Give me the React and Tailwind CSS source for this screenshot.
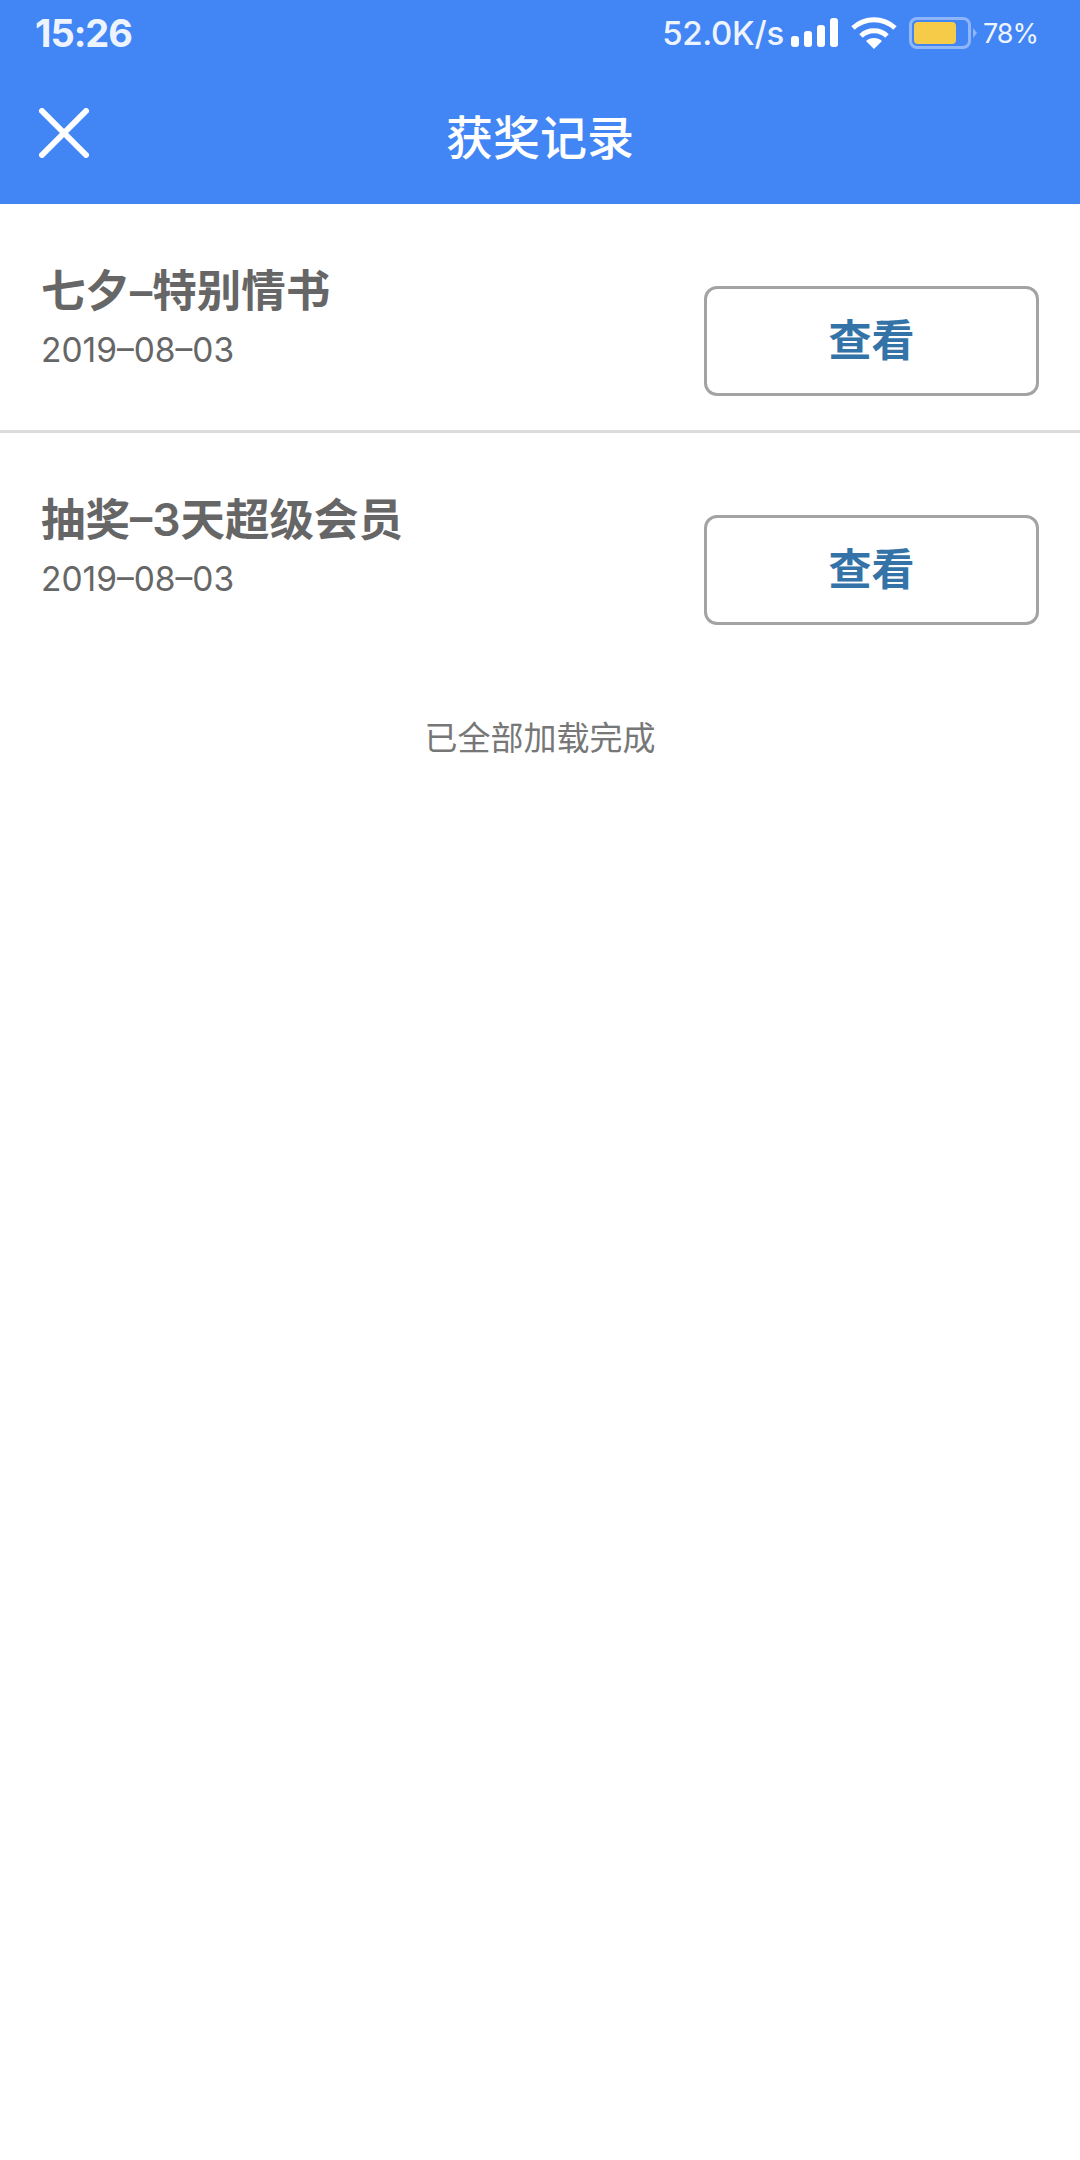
const CJK = "font-['Inter','Noto_Sans_CJK_SC',sans-serif]";

const records = [
  { title: '七夕–特别情书', date: '2019–08–03' },
  { title: '抽奖–3天超级会员', date: '2019–08–03' },
];

function SignalIcon() {
  return (
    <svg width="48" height="30" viewBox="0 0 48 30" fill="#fff">
      <rect x="0" y="18" width="8" height="11" rx="3" />
      <rect x="13" y="13" width="8" height="16" rx="3" />
      <rect x="26" y="7" width="8" height="22" rx="3" />
      <rect x="39" y="0" width="8" height="29" rx="3" />
    </svg>
  );
}

function WifiIcon() {
  return (
    <svg width="46" height="34" viewBox="0 0 46 34" fill="none" stroke="#fff" strokeWidth="5">
      <path d="M2 12 C14 1 32 1 44 12" />
      <path d="M10 20 C17 13 29 13 36 20" />
      <path d="M23 33 L15 25 C19 21 27 21 31 25 Z" fill="#fff" stroke="none" />
    </svg>
  );
}

function BatteryIcon() {
  return (
    <div className="flex items-center">
      <div className="w-[62px] h-[32px] rounded-[8px] border-[3px] border-[#8fb6f9] p-[2px] flex">
        <div className="w-[42px] h-full rounded-[4px] bg-[#f6cb47]" />
      </div>
      <div className="ml-[2px] w-0 h-0 border-y-[5px] border-y-transparent border-l-[4px] border-l-[#8fb6f9]" />
    </div>
  );
}

function StatusBar() {
  return (
    <div className="h-[66px] pl-[35px] pr-[42px] flex items-center justify-between text-[#eef4ff]">
      <span className="text-[38px] font-bold tracking-[-1px] leading-none">15:26</span>
      <div className="flex items-center">
        <span className="text-[33px] font-medium tracking-[-0.3px] leading-none">52.0K/s</span>
        <div className="ml-[7px]">
          <SignalIcon />
        </div>
        <div className="ml-[12px]">
          <WifiIcon />
        </div>
        <div className="ml-[12px]">
          <BatteryIcon />
        </div>
        <span className="ml-[6px] text-[27px] tracking-[-1px] leading-none">78%</span>
      </div>
    </div>
  );
}

function Header() {
  return (
    <div className="bg-[#4285f5]">
      <StatusBar />
      <div className="relative h-[138px] flex items-center justify-center">
        <svg className="absolute left-[39px] top-[42px]" width="50" height="50" viewBox="0 0 50 50" stroke="#fff" strokeWidth="6" strokeLinecap="round">
          <path d="M3 3 L47 47 M47 3 L3 47" />
        </svg>
        <h1 className="pt-[5px] text-[47px] font-medium text-white leading-none">获奖记录</h1>
      </div>
    </div>
  );
}

function RecordRow({ title, date, last }) {
  return (
    <div className={`h-[229px] pl-[41px] pr-[41px] flex justify-between ${last ? '' : 'border-b-[3px] border-[#dcdcdc]'}`}>
      <div className="pt-[62px]">
        <div className="text-[44.5px] font-semibold leading-[50px] text-[#666666]">{title}</div>
        <div className="mt-[15px] text-[33.5px] leading-[38px] text-[#666666]">{date}</div>
      </div>
      <button className="mt-[82px] w-[335px] h-[110px] rounded-[13px] border-[3px] border-[#a3a3a3] bg-white text-[43px] font-bold text-[#3373a8] flex items-center justify-center pb-[2px]">
        查看
      </button>
    </div>
  );
}

export default function App() {
  return (
    <div className={`w-[1080px] h-[2160px] bg-white flex flex-col ${CJK}`}>
      <Header />
      {records.map((r, i) => (
        <RecordRow key={r.title} {...r} last={i === records.length - 1} />
      ))}
      <div className="mt-[56px] text-center text-[33px] leading-[40px] text-[#777777]">已全部加载完成</div>
    </div>
  );
}
